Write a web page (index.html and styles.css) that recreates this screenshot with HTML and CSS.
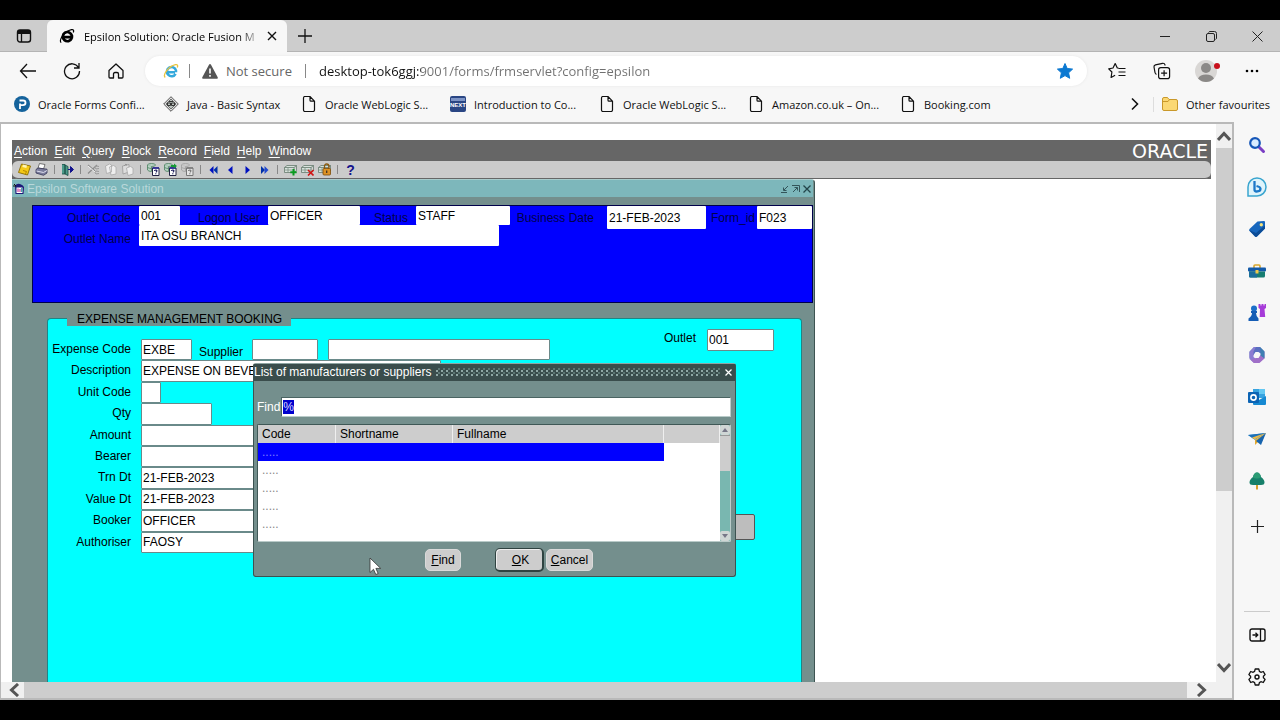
FILE: index.html
```
<!DOCTYPE html>
<html lang="en">
<head>
    <meta charset="UTF-8">
    <meta name="viewport" content="width=device-width, initial-scale=1.0">
    <title>Epsilon Solution: Oracle Fusion Middleware</title>
    <link rel="stylesheet" href="styles.css">
</head>
<body>
<div class="browser">
    <!-- tab strip -->
    <header class="tabs">
        <button class="tab-menu" aria-label="Tab actions">
            <svg width="16" height="16" viewBox="0 0 16 16"><rect x="1.5" y="2" width="13" height="12" rx="2.5" fill="none" stroke="#111" stroke-width="1.4"/><path d="M1.5 6V4a2 2 0 0 1 2-2h9a2 2 0 0 1 2 2v2z" fill="#111"/><path d="M5.5 6v8" stroke="#111" stroke-width="1.3"/></svg>
        </button>
        <div class="tab">
            <svg width="16" height="16" viewBox="0 0 16 16"><path d="M4.5 9.2h6.3M12.7 10.3A4.6 4.6 0 1 1 12.900 7.600q.1.8 0 1.500H8" fill="none" stroke="#000" stroke-width="2.700"/><path d="M2.200 14.700C-.5 12 5 3.500 12.500 1.600c2.500-.4 2.400 1.500 1.700 3" fill="none" stroke="#000" stroke-width="1.200"/></svg>
            <span class="tab-title">Epsilon Solution: Oracle Fusion M</span>
            <button aria-label="Close tab"><svg width="10" height="10" viewBox="0 0 10 10"><path d="M1 1l8 8M9 1L1 9" stroke="#111" stroke-width="1.4"/></svg></button>
        </div>
        <button class="new-tab" aria-label="New tab"><svg width="14" height="14" viewBox="0 0 14 14"><path d="M7 0v14M0 7h14" stroke="#111" stroke-width="1.300"/></svg></button>
        <div class="window-buttons">
            <button aria-label="Minimise"><svg width="10" height="10" viewBox="0 0 10 10"><path d="M0 5.500h10" stroke="#222"/></svg></button>
            <button aria-label="Restore"><svg width="11" height="11" viewBox="0 0 11 11"><rect x=".5" y="2.500" width="8" height="8" rx="1.500" fill="none" stroke="#222"/><path d="M2.500 1.500Q3 .5 4 .5h4.500a2 2 0 0 1 2 2V7q0 1-1 1.500" fill="none" stroke="#222"/></svg></button>
            <button aria-label="Close"><svg width="11" height="11" viewBox="0 0 11 11"><path d="M.5.5l10 10M10.500.5l-10 10" stroke="#222"/></svg></button>
        </div>
    </header>

    <!-- address bar -->
    <nav class="navbar">
        <button aria-label="Back"><svg width="18" height="18" viewBox="0 0 18 18"><path d="M8 2L1.500 9 8 16M1.500 9H17" fill="none" stroke="#111" stroke-width="1.300"/></svg></button>
        <button aria-label="Refresh"><svg width="18" height="18" viewBox="0 0 18 18"><path d="M15.500 5.500A7.500 7.500 0 1 0 16.500 9M16 1v5h-5" fill="none" stroke="#111" stroke-width="1.300"/></svg></button>
        <button aria-label="Home"><svg width="18" height="18" viewBox="0 0 18 18"><path d="M2 8.500L9 2l7 6.500V15q0 1-1 1h-3.500v-4q0-1.500-1.500-1.500H8Q6.500 10.500 6.500 12v4H3q-1 0-1-1z" fill="none" stroke="#111" stroke-width="1.300" stroke-linejoin="round"/></svg></button>
        <div class="address">
            <svg width="16" height="16" viewBox="0 0 16 16"><path d="M5 9.200h7M12.600 10.800A4.600 4.600 0 1 1 13 7.500v1.700" fill="none" stroke="#35a9dc" stroke-width="2.500"/><path d="M2.200 14.500C-.5 12 5 3.500 12.500 1.600c2.500-.4 2.400 1.500 1.700 3" fill="none" stroke="#eac33b" stroke-width="1.300"/></svg>
            <span class="bar"></span>
            <svg class="warn" width="16" height="15" viewBox="0 0 16 15"><path d="M8 0q.6 0 1 .8l6.700 12.500q.5 1.400-.7 1.400H1Q-.2 14.700.3 13.300L7 .8Q7.400 0 8 0z" fill="#555"/><path d="M8 4.500v5M8 11v1.800" stroke="#fff" stroke-width="1.600"/></svg>
            <span class="secure">Not secure</span>
            <span class="bar"></span>
            <input type="text" class="url" aria-label="Address" value="desktop-tok6ggj:9001/forms/frmservlet?config=epsilon">
            <button aria-label="Favourite"><svg width="16" height="16" viewBox="0 0 16 16"><path d="M8 .5l2.200 5 5.400.6-4 3.700 1.100 5.500L8 12.600l-4.700 2.700 1.100-5.500-4-3.700 5.400-.6z" fill="#0b78d1" stroke="#0b78d1" stroke-linejoin="round"/></svg></button>
        </div>
        <div class="nav-tools">
            <button aria-label="Favourites"><svg width="18" height="18" viewBox="0 0 18 18"><path d="M10.500 5.500H9.300L7.200 1 5 5.500l-4.300.8 3.200 3.200-.8 5.500 4-2.200M10.500 6h7M10.500 9.500h7M10.500 13h7" transform="translate(0 .5)" fill="none" stroke="#111" stroke-width="1.200" stroke-linejoin="round"/></svg></button>
            <button aria-label="Collections"><svg width="18" height="18" viewBox="0 0 18 18"><rect x="5.600" y="5.600" width="11" height="11" rx="2.200" fill="none" stroke="#111" stroke-width="1.200"/><path d="M11.100 8.200v6M8.100 11.200h6M3.500 12.300Q2.300 12 2 10.500L1 5Q.8 3.300 2.500 2.800l7-1.500q2-.3 2.500 1.500v.8" fill="none" stroke="#111" stroke-width="1.200"/></svg></button>
            <button aria-label="Profile"><svg width="26" height="24" viewBox="0 0 26 24"><circle cx="12" cy="12" r="11" fill="#d9d7d5"/><circle cx="12" cy="9" r="5" fill="#8b8987"/><path d="M4 19.500Q6 15.500 12 15.500t8 4q-3.500 3.500-8 3.500t-8-3.500z" fill="#8b8987"/><circle cx="23" cy="7" r="3" fill="#c8101c"/></svg></button>
            <button aria-label="Settings and more"><svg width="14" height="4" viewBox="0 0 14 4"><circle cx="2" cy="2" r="1.300"/><circle cx="7" cy="2" r="1.300"/><circle cx="12" cy="2" r="1.300"/></svg></button>
        </div>
    </nav>

    <!-- shared page icon -->
    <svg class="defs" width="0" height="0">
        <symbol id="page" viewBox="0 0 16 16"><path d="M2.500 2q0-1.500 1.500-1.500h5l4.500 4.700V14q0 1.500-1.500 1.500H4q-1.500 0-1.500-1.500zM9 .8v3.400q0 1 1 1h3.400" fill="none" stroke="#111" stroke-width="1.200"/></symbol>
    </svg>
    <nav class="bookmarks">
        <a href="#"><svg width="16" height="16" viewBox="0 0 16 16"><circle cx="8" cy="8" r="8" fill="#15639c"/><path d="M6 13V7.500M5.500 4.500H9q2.500 0 2.500 2.300T9 9.200H6" fill="none" stroke="#fff" stroke-width="1.800"/></svg>Oracle Forms Confi...</a>
        <a href="#" class="narrow"><svg width="16" height="16" viewBox="0 0 16 16"><path d="M8 .7L15.300 8 8 15.300.7 8z" fill="#ddd" stroke="#555"/><path d="M8 3l5 5-5 5-5-5z" fill="#bbc3bf" stroke="#444" stroke-width=".7"/><path d="M4.500 7h3v2.500h-3zM8.500 7h3v2.500h-3zM6 5.500h4" fill="none" stroke="#333"/></svg>Java - Basic Syntax</a>
        <a href="#"><svg width="16" height="16"><use href="#page"/></svg>Oracle WebLogic S...</a>
        <a href="#"><svg width="16" height="16" viewBox="0 0 16 16"><rect width="16" height="16" rx="2" fill="#2a4684"/><path d="M1 2h14v3H1z" fill="#7d94c5"/><text x="8" y="11" text-anchor="middle" font-family="Liberation Sans" font-weight="bold" font-size="6" fill="#fff">NEXT</text></svg>Introduction to Co...</a>
        <a href="#"><svg width="16" height="16"><use href="#page"/></svg>Oracle WebLogic S...</a>
        <a href="#" class="wide"><svg width="16" height="16"><use href="#page"/></svg>Amazon.co.uk – On...</a>
        <a href="#"><svg width="16" height="16"><use href="#page"/></svg>Booking.com</a>
        <button class="more" aria-label="More favourites"><svg width="8" height="14" viewBox="0 0 8 14"><path d="M1 1.500L6.500 7 1 12.500" fill="none" stroke="#111" stroke-width="1.600"/></svg></button>
        <a href="#" class="other"><svg width="16" height="14" viewBox="0 0 16 14"><path d="M.5 2Q.5.500 2 .5h3.500l1.500 2h7Q15.500 2.500 15.500 4v8q0 1.500-1.500 1.500H2Q.5 13.500.5 12z" fill="#fbd873" stroke="#c9982a"/><path d="M.5 4.500H6l1.500-2" fill="none" stroke="#c9982a"/></svg>Other favourites</a>
    </nav>

    <div class="main">
        <div class="view">
            <div class="page">
                <div class="applet">
                    <div class="menubar">
                        <button><u>A</u>ction</button>
                        <button><u>E</u>dit</button>
                        <button><u>Q</u>uery</button>
                        <button><u>B</u>lock</button>
                        <button><u>R</u>ecord</button>
                        <button><u>F</u>ield</button>
                        <button><u>H</u>elp</button>
                        <button><u>W</u>indow</button>
                        <span class="logo">ORACLE</span>
                    </div>
                    <div class="toolbar-wrap">
                        <svg class="defs" width="0" height="0">
                            <symbol id="sheet" viewBox="0 0 13 13"><ellipse cx="4.500" cy="2" rx="4" ry="1.500" fill="#b8d2c4" stroke="#4b8060" stroke-width=".8"/><path d="M.5 2v5q1 1.500 4 1.500V3.500M.5 4.500q2 1 4 1" fill="#b8d2c4" stroke="#4b8060" stroke-width=".8"/><path d="M5.500 5h6.500v7.500H5.500z" fill="#fff" stroke="#224"/><path d="M5.500 5h6.500" stroke="#229" stroke-width="1.500"/><path d="M7.500 8q0-1 1.200-1 1.300 0 1.200 1-.1.700-1.100 1.200M8.800 10.300v1" fill="none" stroke="#115" stroke-width="1.100"/></symbol>
                            <symbol id="record" viewBox="0 0 13 13"><path d="M.5 4.500L3 2.500h9.500L10 4.500zM.5 4.500v5H10v-5M10 9.500l2.500-2v-5" fill="#d8e2dc" stroke="#667b6e" stroke-width=".8"/><path d="M1 7h9M4 4.500v5" stroke="#7d9386" stroke-width=".8"/></symbol>
                        </svg>
                        <div class="toolbar">
                            <button aria-label="Save"><svg width="13" height="13" viewBox="0 0 13 13"><path d="M3.500 1L12.500 3 9.500 12 .5 9.500z" fill="#f4c917" stroke="#8a6b00" stroke-width=".9"/><path d="M5 1.500L9 2.500 8.300 5 4.300 4z" fill="#fff5b0"/><path d="M5 7.500l3.500 1L7.500 11" fill="none" stroke="#b58900"/></svg></button>
                            <button aria-label="Print"><svg width="13" height="13" viewBox="0 0 13 13"><path d="M4.500.5L10 1.500 8.500 6 3 5z" fill="#fff" stroke="#555" stroke-width=".8"/><path d="M1 6.500L3 5l9 1.200V10l-3.500 2.300L1 10z" fill="#7b7d9c" stroke="#335" stroke-width=".8"/><path d="M1.500 8l7 1.500L12 7.500" stroke="#dde" fill="none"/></svg></button>
                            <i></i>
                            <button aria-label="Exit"><svg width="13" height="13" viewBox="0 0 13 13"><path d="M1 1.500h3V11H1M4 2l3 1.500v9L4 11z" fill="#4c9a8a" stroke="#164c43" stroke-width=".8"/><path d="M7 6.500h5M9.500 3.500l3 3-3 3z" fill="#12128c" stroke="#12128c"/></svg></button>
                            <i></i>
                            <button aria-label="Cut"><svg width="13" height="13" viewBox="0 0 13 13"><path d="M1 2l7 6M1 10.500L10 2" stroke="#8c8c8c" stroke-width="1.200"/><path d="M12 3.500Q8 2 8 4.500T12 5.500M12 8.500Q8 7 8 9.500t4 1" fill="none" stroke="#999"/><path d="M1 3l7 6" stroke="#fff" stroke-width=".8"/></svg></button>
                            <button aria-label="Copy"><svg width="13" height="13" viewBox="0 0 13 13"><path d="M1.500 3l4-2 2 1v7l-5 1.500zM5.500 4l4-1.500 2.500 1.500v7l-5 1z" fill="#eee" stroke="#aaa" stroke-width=".8"/></svg></button>
                            <button aria-label="Paste"><svg width="13" height="13" viewBox="0 0 13 13"><path d="M1.500 3L8 1.500V9L2 11z" fill="#ddd" stroke="#999" stroke-width=".8"/><path d="M5.500 5l4-1.500L12 5v6l-5 1.500z" fill="#eee" stroke="#aaa" stroke-width=".8"/><path d="M3.500 2.500q1-2 2.500-.5" fill="none" stroke="#888"/></svg></button>
                            <i></i>
                            <button aria-label="Enter query"><svg width="13" height="13"><use href="#sheet"/></svg></button>
                            <button aria-label="Execute query"><svg width="13" height="13" viewBox="0 0 13 13"><use href="#sheet"/><path d="M7 2h3V.5L13 3l-3 2.500V4H7z" fill="#179b35"/></svg></button>
                            <button aria-label="Cancel query" class="off"><svg width="13" height="13"><use href="#sheet"/></svg></button>
                            <i></i>
                            <button aria-label="Previous block"><svg width="10" height="10" viewBox="0 0 10 10"><path d="M4.500 1v8L.5 5z" fill="#0010c0"/><path d="M8.500 1v8L4.500 5z" fill="#0030a8"/></svg></button>
                            <button aria-label="Previous record"><svg width="10" height="10" viewBox="0 0 10 10"><path d="M6.500 1v8L2 5z" fill="#0010c0"/></svg></button>
                            <button aria-label="Next record"><svg width="10" height="10" viewBox="0 0 10 10"><path d="M2.500 1v8L7 5z" fill="#0010c0"/></svg></button>
                            <button aria-label="Next block"><svg width="10" height="10" viewBox="0 0 10 10"><path d="M1 1v8l4-4z" fill="#0030a8"/><path d="M4.500 1v8l4-4z" fill="#2048d0"/></svg></button>
                            <i></i>
                            <button aria-label="Insert record"><svg width="13" height="13" viewBox="0 0 13 13"><use href="#record"/><path d="M9.500 6v6.500M6.300 9.300h6.400" stroke="#0a9a20" stroke-width="2"/></svg></button>
                            <button aria-label="Remove record"><svg width="13" height="13" viewBox="0 0 13 13"><use href="#record"/><path d="M7 7l5.500 5.500M12.500 7L7 12.500" stroke="#d01515" stroke-width="1.600"/></svg></button>
                            <button aria-label="Lock record"><svg width="13" height="13" viewBox="0 0 13 13"><use href="#record"/><path d="M6.500 6V3.500q0-2.500 2.200-2.500t2.200 2.500V6" fill="none" stroke="#8a5a10" stroke-width="1.300"/><rect x="5" y="5.500" width="7.500" height="6.500" rx="1" fill="#dd9224" stroke="#7b4a08" stroke-width=".8"/><path d="M8.700 7.500v2.500" stroke="#432" stroke-width="1.300"/></svg></button>
                            <i></i>
                            <button class="help" aria-label="Help">?</button>
                        </div>
                    </div>

                    <div class="window">
                        <div class="titlebar">
                            <svg width="12" height="12" viewBox="0 0 12 12"><path d="M2 2.500Q4 0 7 1t4 3l-.5 7h-8z" fill="#1c1c7a"/><path d="M3.500 4.500h6v5.500h-6z" fill="#fff"/><path d="M5 5.500V9M7 6v3" stroke="#c2188a"/><path d="M8.700 5v4" stroke="#1a9a9a"/><path d="M0 3h3M1 1l2 2" stroke="#111"/></svg>
                            <span class="caption">Epsilon Software Solution</span>
                            <button aria-label="Minimise"><svg width="8" height="8" viewBox="0 0 8 8"><path d="M7 1L3 5M2.500 2.500V5.500h3M0 7.500h6" fill="none" stroke="#33555a"/></svg></button>
                            <button aria-label="Maximise"><svg width="8" height="8" viewBox="0 0 8 8"><path d="M0 .5h7.500V7M5.500 2.500L1 7M2.500 2.500h3V5.500" fill="none" stroke="#33555a"/></svg></button>
                            <button aria-label="Close"><svg width="8" height="8" viewBox="0 0 8 8"><path d="M.5.5l7 7M7.500.5l-7 7" stroke="#23454a" stroke-width="1.300"/></svg></button>
                        </div>

                        <div class="session">
                            <div class="session-row">
                                <label for="outletCode" class="first">Outlet Code</label><input id="outletCode" class="w-code" value="001">
                                <label for="logonUser" class="user">Logon User</label><input id="logonUser" class="w-user" value="OFFICER">
                                <label for="status" class="status">Status</label><input id="status" class="w-status" value="STAFF">
                                <label for="businessDate" class="date">Business Date</label><input id="businessDate" class="w-date" value="21-FEB-2023">
                                <label for="formId" class="form-id">Form_id</label><input id="formId" class="w-id" value="F023">
                            </div>
                            <div class="session-row">
                                <label for="outletName" class="first">Outlet Name</label><input id="outletName" class="w-name" value="ITA OSU BRANCH">
                            </div>
                        </div>

                        <form class="booking" action="#">
                            <h2>EXPENSE MANAGEMENT BOOKING</h2>
                            <div class="booking-body">
                                <div class="fields">
                                    <label for="expenseCode">Expense Code</label>
                                    <div class="line">
                                        <input id="expenseCode" class="w-exp" value="EXBE">
                                        <label for="supplier" class="supplier">Supplier</label>
                                        <input id="supplier" class="w-sup">
                                        <input class="w-supname" aria-label="Supplier name">
                                    </div>
                                    <label for="description">Description</label>
                                    <div class="line"><input id="description" class="w-long" value="EXPENSE ON BEVERAGES"></div>
                                    <label for="unitCode">Unit Code</label>
                                    <div class="line"><input id="unitCode" class="w-unit"></div>
                                    <label for="qty">Qty</label>
                                    <div class="line"><input id="qty" class="w-qty"></div>
                                    <label for="amount">Amount</label>
                                    <div class="line"><input id="amount" class="w-mid"></div>
                                    <label for="bearer">Bearer</label>
                                    <div class="line"><input id="bearer" class="w-mid"></div>
                                    <label for="trnDt">Trn Dt</label>
                                    <div class="line"><input id="trnDt" class="w-mid" value="21-FEB-2023"></div>
                                    <label for="valueDt">Value Dt</label>
                                    <div class="line"><input id="valueDt" class="w-mid" value="21-FEB-2023"></div>
                                    <label for="booker">Booker</label>
                                    <div class="line"><input id="booker" class="w-mid" value="OFFICER"></div>
                                    <label for="authoriser">Authoriser</label>
                                    <div class="line"><input id="authoriser" class="w-mid" value="FAOSY"></div>
                                </div>
                                <div class="side">
                                    <div class="outlet">
                                        <label for="outlet">Outlet</label>
                                        <input id="outlet" value="001">
                                    </div>
                                    <button type="button" class="action" aria-label="Commit"></button>
                                </div>
                            </div>
                        </form>

                        <!-- list of values -->
                        <div class="dialog" role="dialog" aria-labelledby="lovTitle">
                            <div class="dialog-title">
                                <span id="lovTitle">List of manufacturers or suppliers</span>
                                <span class="grip"></span>
                                <button aria-label="Close"><svg width="7" height="7" viewBox="0 0 7 7"><path d="M.5.5l6 6M6.500.5l-6 6" stroke="#fff" stroke-width="1.300"/></svg></button>
                            </div>
                            <div class="find">
                                <label for="find">Find</label>
                                <div class="find-box"><input id="find" value="%"></div>
                            </div>
                            <div class="list">
                                <table>
                                    <thead>
                                        <tr><th class="c-code">Code</th><th class="c-short">Shortname</th><th class="c-full">Fullname</th><th></th></tr>
                                    </thead>
                                    <tbody>
                                        <tr class="selected"><td>.....</td><td></td><td></td><td></td></tr>
                                        <tr><td>.....</td><td></td><td></td><td></td></tr>
                                        <tr><td>.....</td><td></td><td></td><td></td></tr>
                                        <tr><td>.....</td><td></td><td></td><td></td></tr>
                                        <tr><td>.....</td><td></td><td></td><td></td></tr>
                                    </tbody>
                                </table>
                                <div class="list-scroll">
                                    <button aria-label="Up"><svg width="6" height="4" viewBox="0 0 6 4"><path d="M3 0l3 4H0z" fill="#778"/></svg></button>
                                    <div class="list-thumb"></div>
                                    <button aria-label="Down"><svg width="6" height="4" viewBox="0 0 6 4"><path d="M0 0h6L3 4z" fill="#778"/></svg></button>
                                </div>
                            </div>
                            <div class="dialog-buttons">
                                <button class="find-btn"><u>F</u>ind</button>
                                <button class="ok"><u>O</u>K</button>
                                <button><u>C</u>ancel</button>
                            </div>
                            <svg class="pointer" width="13" height="19" viewBox="0 0 13 19"><path d="M1 1v14.500l3.500-3.200 2.300 5.200 2.400-1-2.300-5.100h4.800z" fill="#fff" stroke="#333" stroke-width=".8"/></svg>
                        </div>
                    </div>
                </div>
            </div>
            <div class="vscroll">
                <button aria-label="Scroll up"><svg width="14" height="11" viewBox="0 0 14 11"><path d="M1 9l6-6.500L13 9" fill="none" stroke="#555" stroke-width="3"/></svg></button>
                <div class="vthumb"></div>
                <button class="down" aria-label="Scroll down"><svg width="14" height="11" viewBox="0 0 14 11"><path d="M1 2l6 6.500L13 2" fill="none" stroke="#555" stroke-width="3"/></svg></button>
            </div>
            <div class="hscroll">
                <button aria-label="Scroll left"><svg width="11" height="14" viewBox="0 0 11 14"><path d="M9 1L2.500 7 9 13" fill="none" stroke="#555" stroke-width="3"/></svg></button>
                <div class="hthumb"></div>
                <button class="right" aria-label="Scroll right"><svg width="11" height="14" viewBox="0 0 11 14"><path d="M2 1l6.500 6L2 13" fill="none" stroke="#555" stroke-width="3"/></svg></button>
            </div>
        </div>

        <aside class="sidebar">
            <button aria-label="Search"><svg width="18" height="18" viewBox="0 0 18 18"><path d="M10.500 10.500l5 5" stroke="#7a3fc4" stroke-width="3" stroke-linecap="round"/><circle cx="7" cy="7" r="4.800" fill="#d9ecff" stroke="#1556b8" stroke-width="2.200"/></svg></button>
            <button aria-label="Discover"><svg width="20" height="20" viewBox="0 0 20 20"><path d="M1 19V10a9 9 0 1 1 9 9z" fill="#dff4fb" stroke="#3aa5cf" stroke-width="1.500"/><path d="M7.500 4v8.500q0 2 2 2 4 0 4-2.700Q13.500 10 9.500 9" fill="none" stroke="#1c78c8" stroke-width="2.300"/></svg></button>
            <button aria-label="Shopping"><svg width="18" height="18" viewBox="0 0 18 18"><path d="M9.500 1.500L16 1q1 0 1 1v6.500L9 16.500q-1 .8-2 0L1.500 11q-.8-1 0-2z" fill="#1666bd"/><path d="M1 10l6 6.500q1 .8 2 0l8-8V5.500l-9 7.500z" fill="#0c4c96"/><circle cx="13.300" cy="4.700" r="1.700" fill="#f5e27a"/></svg></button>
            <button aria-label="Tools"><svg width="18" height="14" viewBox="0 0 18 14"><path d="M6 4V2q0-1 1-1h4q1 0 1 1v2" fill="none" stroke="#d9a62b" stroke-width="1.600"/><rect y="3.500" width="18" height="4" rx="1" fill="#1259a8"/><path d="M1 7.500h16V12q0 1.500-1.500 1.500h-13Q1 13.500 1 12z" fill="#177d72"/><path d="M1 7.500h8v6H2.500Q1 13.500 1 12z" fill="#1b6d9c"/><rect x="7.500" y="6" width="3" height="3.500" fill="#efc84a"/></svg></button>
            <button aria-label="Games"><svg width="18" height="18" viewBox="0 0 18 18"><circle cx="6" cy="4.500" r="3" fill="#1c6fc9"/><path d="M3 7h6v2H8q0 3 2.500 5.500V17h-10v-2.500Q4 12 4 9H3z" fill="#155db5"/><path d="M10.500 0h2v1.500h1V0h2v1.500h1V0H18v4l-1.500 1 .7 8h-5.500L12 5l-1.500-1z" fill="#a63bd8"/></svg></button>
            <button aria-label="Microsoft 365"><svg width="18" height="18" viewBox="0 0 18 18"><path d="M6 1h6l4.500 4.500L12.500 7.500 10.500 6h-3L5.500 9 1.500 12V5.500z" fill="#5a6fc0"/><path d="M1.500 6L6 1h2L5.500 5.500v5.500L8 13v4H6l-4.500-4z" fill="#8b7bd2"/><path d="M16.500 5.500v7L11.500 17H6l-3-3 5-2h2.500l2-3z" fill="#a06fc8"/><path d="M12 1l4.500 4.500v7L12.500 9.500V6z" fill="#3f7fb2"/></svg></button>
            <button aria-label="Outlook"><svg width="18" height="18" viewBox="0 0 18 18"><rect x="5" y="1" width="12" height="9" fill="#37a3e0"/><path d="M11 1h6v5h-6z" fill="#64c8f2"/><path d="M5 8l6 4 7-4v8q0 1-1 1H6q-1 0-1-1z" fill="#1689d2"/><rect y="4" width="11" height="11" rx="1" fill="#0c64b4"/><circle cx="5.500" cy="9.500" r="2.600" fill="none" stroke="#fff" stroke-width="1.600"/></svg></button>
            <button aria-label="Drop"><svg width="18" height="14" viewBox="0 0 18 14"><path d="M0 3L18 1 7 8z" fill="#2f93d8"/><path d="M18 1L7 8v5l3-3z" fill="#e3a92d"/><path d="M18 1l-5 12-5-4z" fill="#1764ae"/><path d="M0 3l18-2L6 7z" fill="#1d70b8"/><path d="M4 5.500L18 1 6.500 7.500z" fill="#edba45"/></svg></button>
            <button aria-label="E-tree"><svg width="16" height="18" viewBox="0 0 16 18"><path d="M7 12h2v5.500H7z" fill="#d9a12c"/><path d="M8 .5q3 0 4 4.500 3.500 2.500 3.500 5.500 0 2.500-3.500 2.500H4Q.5 13 .5 10.500.5 7.500 4 5 5 .5 8 .5z" fill="#17806a"/><path d="M8 .5q3 0 4 4.500-2 2-5 1.500T4 5Q5 .5 8 .5z" fill="#2b9b74"/></svg></button>
            <button class="add" aria-label="Customise"><svg width="13" height="13" viewBox="0 0 13 13"><path d="M6.500 0v13M0 6.500h13" stroke="#222" stroke-width="1.200"/></svg></button>
            <hr>
            <button aria-label="Hide sidebar"><svg width="17" height="14" viewBox="0 0 17 14"><rect x="1" y="1" width="15" height="12" rx="2" fill="none" stroke="#111" stroke-width="1.400"/><path d="M11.500 1v12M3.500 7h5M6.500 4.700L8.800 7 6.500 9.300" fill="none" stroke="#111" stroke-width="1.300"/></svg></button>
            <button aria-label="Settings"><svg width="18" height="18" viewBox="0 0 18 18"><path d="M7.200 1h3.600l.6 2.400 1.500.9 2.400-.8 1.800 3.100L15.400 8.200v1.600l1.700 1.600-1.800 3.100-2.400-.8-1.500.9-.6 2.400H7.200l-.6-2.400-1.500-.9-2.400.8L.9 11.400l1.700-1.600V8.200L.9 6.600l1.800-3.100 2.400.8 1.500-.9z" fill="none" stroke="#111" stroke-width="1.300" stroke-linejoin="round"/><circle cx="9" cy="9" r="2" fill="none" stroke="#111" stroke-width="1.400"/></svg></button>
        </aside>
    </div>
</div>
</body>
</html>
```
FILE: styles.css
```
*{
    margin: 0;
    padding: 0;
    box-sizing: border-box;
}
:root{
    --chrome: #f7f7f7;
    --strip: #cdcdcd;
    --teal: #748f8d;
    --cyan: #00ffff;
    --blue: #0000ff;
    --ui: "Open Sans", "Noto Sans", sans-serif;
    --font: "Liberation Sans", Arial, sans-serif;
}
body{
    height: 100vh;
    padding: 20px 0;
    background-color: black;
    font-family: var(--font);
    font-size: 12px;
    overflow: hidden;
}
button{
    display: flex;
    align-items: center;
    justify-content: center;
    border: none;
    background: none;
    font: inherit;
    color: inherit;
}
input{
    border: none;
    outline: none;
    background-color: white;
    font: inherit;
    color: black;
    min-width: 0;
}
svg{
    display: block;
    flex: none;
}
.defs{
    position: absolute;
}
.browser{
    display: flex;
    flex-direction: column;
    height: 100%;
    background-color: var(--chrome);
}

/* tabs */
.tabs{
    display: flex;
    flex: none;
    height: 32px;
    background-color: var(--strip);
    box-shadow: inset 0 -1px #b4b4b4;
    font-family: var(--ui);
}
.tab-menu{
    width: 47px;
}
.tab{
    display: flex;
    align-items: center;
    width: 240px;
    padding: 0 10px 0 12px;
    gap: 9px;
    background-color: var(--chrome);
    border-radius: 6px 6px 0 0;
}
.tab-title{
    flex: 1;
    white-space: nowrap;
    font-size: 11px;
    mask-image: linear-gradient(to right, black 155px, transparent 178px);
}
.new-tab{
    width: 36px;
}
.window-buttons{
    display: flex;
    margin-left: auto;
}
.window-buttons button{
    width: 46px;
}

/* address bar */
.navbar{
    display: flex;
    flex: none;
    align-items: center;
    height: 38px;
    padding: 0 6px;
    font-family: var(--ui);
}
.navbar > button{
    width: 44px;
}
.address{
    display: flex;
    flex: 1;
    align-items: center;
    height: 30px;
    margin: 0 7px;
    padding: 0 14px 0 18px;
    border-radius: 15px;
    background-color: white;
    box-shadow: 0 0 3px #e6e6e6;
    font-size: 13px;
}
.bar{
    width: 1px;
    height: 14px;
    margin: 0 12px 0 10px;
    background-color: #888;
}
.secure{
    width: 79px;
    margin-left: 8px;
    color: #666;
    white-space: nowrap;
}
.secure + .bar{
    margin: 0 13px 0 0;
}
.url{
    flex: 1;
    background-image: linear-gradient(to right, #111 102px, #707070 102px);
    background-clip: text;
    color: transparent;
}
.nav-tools{
    display: flex;
}
.nav-tools button{
    width: 45px;
}

/* bookmarks */
.bookmarks{
    display: flex;
    flex: none;
    align-items: center;
    height: 32px;
    padding: 0 10px 4px 14px;
    font-family: var(--ui);
    font-size: 11px;
}
.bookmarks a{
    display: flex;
    align-items: center;
    gap: 8px;
    width: 149px;
    color: #111;
    text-decoration: none;
    white-space: nowrap;
}
.bookmarks .narrow{
    width: 138px;
}
.bookmarks .wide{
    width: 152px;
}
.bookmarks .more{
    margin-left: auto;
    padding-right: 14px;
}
.bookmarks .other{
    width: auto;
    padding-left: 8px;
    border-left: 1px solid #ddd;
}

/* page area */
.main{
    display: flex;
    flex: 1;
    min-height: 0;
}
.view{
    display: grid;
    flex: 1;
    grid-template-columns: 1fr 16px;
    grid-template-rows: 1fr 16px;
    min-width: 0;
    border: 2px solid #b9b9b9;
    border-left-width: 1px;
    background-color: #f0f0f0;
}
.page{
    min-width: 0;
    min-height: 0;
    padding: 16px 5px 0 11px;
    background-color: white;
    overflow: hidden;
}
.applet{
    display: flex;
    flex-direction: column;
    height: 100%;
}
.vscroll{
    display: flex;
    flex-direction: column;
}
.vscroll button{
    height: 24px;
}
.vthumb{
    flex: 0 1 343px;
    background-color: var(--strip);
}
.vscroll .down{
    height: 30px;
    margin-top: auto;
}
.hscroll{
    display: flex;
    grid-column: 1 / 3;
    padding-right: 17px;
}
.hscroll button{
    width: 23px;
    padding-left: 4px;
}
.hthumb{
    flex: 1;
    background-color: var(--strip);
}
.hscroll .right{
    width: 28px;
    padding: 0;
}

/* forms menu and toolbar */
.menubar{
    display: flex;
    flex: none;
    align-items: center;
    gap: 7px;
    height: 21px;
    padding: 0 3px 0 2px;
    background-color: #666;
    color: white;
}
.menubar u{
    text-underline-offset: 2px;
}
.logo{
    margin-left: auto;
    font-family: "DejaVu Sans", sans-serif;
    font-size: 19px;
    line-height: 20px;
}
.toolbar-wrap{
    flex: none;
    background-color: #666;
}
.toolbar{
    display: flex;
    align-items: center;
    height: 18px;
    padding-left: 4px;
    border-bottom: 1px solid #666;
    border-radius: 6px;
    background-color: #cbcbcb;
}
.toolbar button{
    width: 17px;
}
.toolbar i{
    width: 9px;
    height: 9px;
    background: linear-gradient(#888, #888) 4px 0 / 1px 9px no-repeat;
}
.toolbar .off{
    filter: grayscale(1);
    opacity: 0.5;
}
.toolbar .help{
    font-size: 14px;
    font-weight: bold;
    color: #14148c;
}

/* form window */
.window{
    position: relative;
    display: flex;
    flex: 1;
    flex-direction: column;
    width: 803px;
    min-height: 0;
    padding-right: 1px;
    border-right: 1px solid #3d5452;
    border-top: 1px solid #a8cccc;
    border-radius: 0 4px 0 0;
    background-color: var(--teal);
}
.titlebar{
    display: flex;
    flex: none;
    align-items: center;
    gap: 2px;
    height: 17px;
    padding: 0 2px 0 1px;
    background-color: #7db7bb;
    color: #b9d8da;
}
.caption{
    flex: 1;
}
.titlebar button{
    width: 9px;
}
.session{
    flex: none;
    height: 98px;
    margin: 8px 0 0 20px;
    border: 1px solid #00004a;
    background-color: var(--blue);
    color: #00004a;
}
.session-row{
    display: flex;
    height: 19px;
    line-height: 24px;
}
.session-row + .session-row{
    line-height: 28px;
}
.session input{
    height: 19px;
    padding-left: 2px;
    border-radius: 1px;
}
.session .first{
    width: 106px;
    padding-right: 8px;
    text-align: right;
}
.session .user,
.session .status,
.session .date,
.session .form-id{
    padding-right: 8px;
    text-align: right;
}
.session .user{
    width: 88px;
}
.session .status{
    width: 56px;
}
.session .date{
    width: 97px;
    padding-right: 13px;
}
.session .form-id{
    width: 51px;
    padding-right: 2px;
}
.session .w-code{
    width: 41px;
}
.session .w-user{
    width: 92px;
}
.session .w-status{
    width: 94px;
}
.session .w-date{
    width: 99px;
    height: 23px;
}
.session .w-id{
    width: 55px;
    height: 23px;
}
.session .w-name{
    width: 360px;
    height: 21px;
}

/* expense booking */
.booking{
    flex: 1;
    min-height: 0;
    margin: 15px 11px 0 35px;
    border: 1px solid #1f8585;
    border-bottom: none;
    border-radius: 4px 4px 0 0;
    background-color: var(--cyan);
}
.booking h2{
    width: 224px;
    height: 14px;
    margin: -7px 0 0 19px;
    padding-left: 10px;
    background-color: var(--teal);
    font-size: 12px;
    font-weight: normal;
    line-height: 14px;
    white-space: nowrap;
}
.booking input{
    height: 100%;
    padding-left: 1px;
    border: 1px solid #6a8a8a;
    border-radius: 1px;
}
.booking-body{
    display: flex;
    justify-content: space-between;
    padding-right: 27px;
}
.fields{
    display: grid;
    grid-template-columns: 83px 410px;
    grid-template-rows: repeat(10, minmax(0, 1fr));
    column-gap: 10px;
    height: 214px;
    margin-top: 13px;
}
.fields > label{
    line-height: 20px;
    text-align: right;
    white-space: nowrap;
}
.line{
    display: flex;
    min-height: 0;
}
.supplier{
    margin: 0 9px 0 7px;
    line-height: 26px;
}
.w-exp{
    width: 51px;
}
.w-sup{
    width: 66px;
    margin-right: 10px;
}
.w-supname{
    width: 222px;
}
.w-long{
    width: 300px;
}
.w-unit{
    width: 20px;
}
.w-qty{
    width: 71px;
}
.w-mid{
    width: 200px;
}
.side{
    display: flex;
    flex-direction: column;
    justify-content: space-between;
    align-items: flex-end;
    height: 211px;
    margin-top: 3px;
}
.outlet{
    display: flex;
    gap: 11px;
    height: 22px;
}
.outlet input{
    width: 67px;
}
.outlet label{
    line-height: 18px;
}
.side .action{
    width: 60px;
    height: 26px;
    margin-right: 19px;
    border: 1px solid #555;
    border-radius: 2px;
    background-color: #bdbdbd;
}

/* list of values dialog */
.dialog{
    position: absolute;
    left: 241px;
    top: 183px;
    width: 483px;
    padding-bottom: 4px;
    border: 1px solid #3c5351;
    border-top-color: #8fa5a3;
    border-radius: 3px;
    background-color: var(--teal);
}
.dialog-title{
    display: flex;
    align-items: center;
    gap: 5px;
    height: 17px;
    padding-right: 3px;
    background-color: #3a4d4c;
    color: white;
    line-height: 14px;
}
.dialog-title span{
    margin-bottom: 2px;
}
.grip{
    flex: 1;
    height: 8px;
    background-image: radial-gradient(circle at 1px 3px, #8fa8a5 1px, transparent 1px), radial-gradient(circle at 3px 1px, #5c7673 1px, transparent 1px);
    background-size: 5px 4px;
}
.find{
    display: flex;
    align-items: center;
    margin: 16px 4px 0 3px;
    color: white;
}
.find-box{
    display: flex;
    flex: 1;
    height: 20px;
    padding: 2px 1px;
    margin-left: 1px;
    border: 1px solid #4a6462;
    border-right-color: #b9cbc9;
    border-bottom-color: #b9cbc9;
    background-color: white;
}
.find-box input{
    flex: 1;
    background: linear-gradient(#0000cd, #0000cd) 0 0 / 11px 100% no-repeat white;
    color: #d9d9ff;
}
.list{
    display: flex;
    height: 118px;
    margin: 7px 4px 0 3px;
    border: 1px solid #3f5856;
    border-right-color: #b9cbc9;
    border-bottom-color: #b9cbc9;
    border-radius: 2px;
    background-color: white;
}
.list table{
    flex: 1;
    align-self: flex-start;
    table-layout: fixed;
    border-collapse: collapse;
}
.list th{
    height: 18px;
    padding-left: 4px;
    background-color: #cdcdcd;
    box-shadow: inset -1px 0 #efefef;
    font-weight: normal;
    text-align: left;
}
.list td{
    height: 18px;
    padding-left: 4px;
    color: #888;
    line-height: 18px;
}
.c-code{
    width: 78px;
}
.c-short{
    width: 117px;
}
.c-full{
    width: 211px;
}
.selected td{
    background-color: var(--blue);
    color: #7c7cff;
}
.selected td:last-child{
    background-color: white;
}
.list-scroll{
    display: flex;
    flex-direction: column;
    width: 10px;
    background-color: #79b7b0;
}
.list-scroll button{
    height: 10px;
    border-radius: 2px;
    background-color: #cfd6d5;
}
.list-scroll .list-thumb{
    flex: 0 0 36px;
    margin-bottom: auto;
    border-top: 1px solid #999;
    background-color: #cdcdcd;
}
.dialog-buttons{
    display: flex;
    align-items: center;
    justify-content: flex-end;
    gap: 2px;
    margin: 6px 142px 0 0;
    height: 24px;
}
.dialog-buttons button{
    width: 47px;
    height: 22px;
    border: 1px solid #dadada;
    border-radius: 5px;
    background-color: #cdcdcd;
}
.dialog-buttons .find-btn{
    width: 36px;
    margin-right: 32px;
}
.dialog-buttons .ok{
    width: 49px;
    height: 24px;
    padding-left: 3px;
    border: 1px solid #2f4341;
    border-right-width: 2px;
    border-bottom-width: 2px;
    box-shadow: inset 1px 1px #eee;
}
.pointer{
    position: absolute;
    left: 115px;
    bottom: 0;
}

/* edge sidebar */
.sidebar{
    display: flex;
    flex: none;
    flex-direction: column;
    width: 46px;
    padding: 2px 0;
}
.sidebar button{
    flex: none;
    height: 42px;
}
.sidebar .add{
    height: 48px;
}
.sidebar hr{
    margin: auto 10px 2px;
    border: none;
    border-top: 1px solid #ccc;
}
```
